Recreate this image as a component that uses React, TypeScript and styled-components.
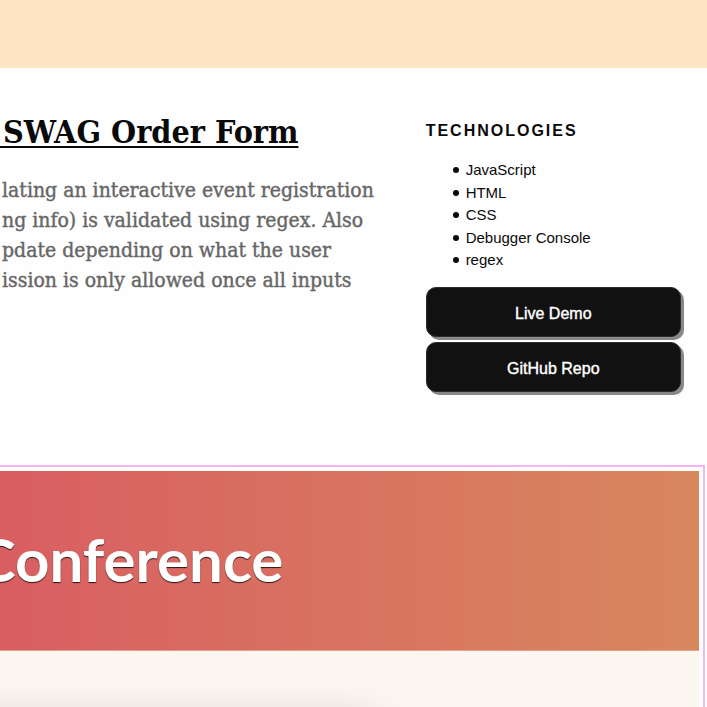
import React from "react";
import styled, { createGlobalStyle } from "styled-components";

const GlobalStyle = createGlobalStyle`
  *, *::before, *::after { box-sizing: border-box; }
  body {
    margin: 0;
    background: #fefefe;
    color: #0a0a0a;
    font-family: "Liberation Sans", Arial, sans-serif;
  }
`;

const Page = styled.div`
  display: flex;
  flex-direction: column;
  height: 100vh;
  overflow: hidden;
`;

const Band = styled.header`
  flex: none;
  height: 68px;
  background: #ffe4c4;
  border-bottom: 1px solid #fbe6cf;
`;

const Project = styled.section`
  flex: none;
  display: grid;
  grid-template-columns: minmax(0, 5fr) minmax(0, 3fr);
  padding: 44px 26px 73px 0;
`;

const Summary = styled.div`
  min-width: 0;
  white-space: nowrap;
  font-family: "DejaVu Serif Condensed", "DejaVu Serif", serif;
`;

const ProjectTitle = styled.h1`
  margin: 0 0 0 -7px;
  font-size: 32px;
  line-height: 40px;
  font-weight: 700;
  text-decoration: underline;
  text-decoration-thickness: 2px;
  text-underline-offset: 3px;
`;

const Description = styled.p`
  margin: 23px 0 0 2px;
  color: #666;
  font-size: 21px;
  line-height: 30px;
  -webkit-text-stroke: 0.4px #666;
`;

const Line = styled.span`
  display: block;
`;

const Sidebar = styled.aside`
  min-width: 0;
`;

const SideTitle = styled.h2`
  margin: 8px 0 0;
  font-size: 16px;
  line-height: 22px;
  font-weight: 700;
  letter-spacing: 2px;
  text-transform: uppercase;
`;

const TechList = styled.ul`
  margin: 17px 0 15px;
  padding-left: 27px;
  list-style: none;
  font-size: 15px;
  line-height: 1.5;
`;

const Tech = styled.li`
  display: flex;
  align-items: center;
  gap: 7px;

  &::before {
    content: "";
    width: 6px;
    height: 6px;
    border-radius: 50%;
    background: #0a0a0a;
  }
`;

const Actions = styled.nav`
  display: flex;
  flex-direction: column;
  gap: 5px;
`;

const ActionLink = styled.a`
  display: flex;
  align-items: center;
  justify-content: center;
  height: 50px;
  padding-top: 4px;
  border: 1px solid #2c2c2c;
  border-radius: 10px;
  background: #111;
  box-shadow: 3px 3px 0 #888;
  color: #fff;
  font-size: 16px;
  line-height: 24px;
  text-decoration: none;
  -webkit-text-stroke: 0.4px #fff;
`;

const Preview = styled.section`
  flex: 1;
  display: flex;
  flex-direction: column;
  min-height: 0;
  margin-right: 2px;
  padding: 4px 4px 0 0;
  border: solid #f7b4f2;
  border-width: 2px 2px 0 0;
  background: #fff;
`;

const Banner = styled.div`
  flex: none;
  display: flex;
  align-items: center;
  height: 180px;
  padding-bottom: 3px;
  overflow: hidden;
  border-bottom: 1px solid #e8a08e;
  background: linear-gradient(90deg, #d95e62, #d87360 50%, #d8875e);
`;

const BannerTitle = styled.h2`
  margin: 0 0 0 -24px;
  color: #fff;
  font-family: Lato, sans-serif;
  font-size: 60px;
  line-height: 72px;
  font-weight: 700;
  text-shadow: 0 1px 1px rgba(0, 0, 0, 0.8);
`;

const FormArea = styled.div`
  flex: 1;
  min-height: 0;
  overflow: hidden;
  padding-top: 72px;
  background: #fbf6ef;
`;

const FormCard = styled.div`
  width: 54%;
  height: 300px;
  margin-left: -40px;
  padding-right: 40px;
  box-sizing: content-box;
  background: #fff;
  box-shadow: 0 0 40px rgba(0, 0, 0, 0.2);
`;

const lines = [
  "lating an interactive event registration",
  "ng info) is validated using regex. Also",
  "pdate depending on what the user",
  "ission is only allowed once all inputs",
];

const technologies = ["JavaScript", "HTML", "CSS", "Debugger Console", "regex"];

export default function App() {
  return (
    <>
      <GlobalStyle />
      <Page>
        <Band />
        <Project>
          <Summary>
            <ProjectTitle>{"\u00a0SWAG Order Form"}</ProjectTitle>
            <Description>
              {lines.map((line) => (
                <Line key={line}>{line}</Line>
              ))}
            </Description>
          </Summary>
          <Sidebar>
            <SideTitle>Technologies</SideTitle>
            <TechList>
              {technologies.map((tech) => (
                <Tech key={tech}>{tech}</Tech>
              ))}
            </TechList>
            <Actions>
              <ActionLink href="#demo">Live Demo</ActionLink>
              <ActionLink href="#repo">GitHub Repo</ActionLink>
            </Actions>
          </Sidebar>
        </Project>
        <Preview>
          <Banner>
            <BannerTitle>Conference</BannerTitle>
          </Banner>
          <FormArea>
            <FormCard />
          </FormArea>
        </Preview>
      </Page>
    </>
  );
}
